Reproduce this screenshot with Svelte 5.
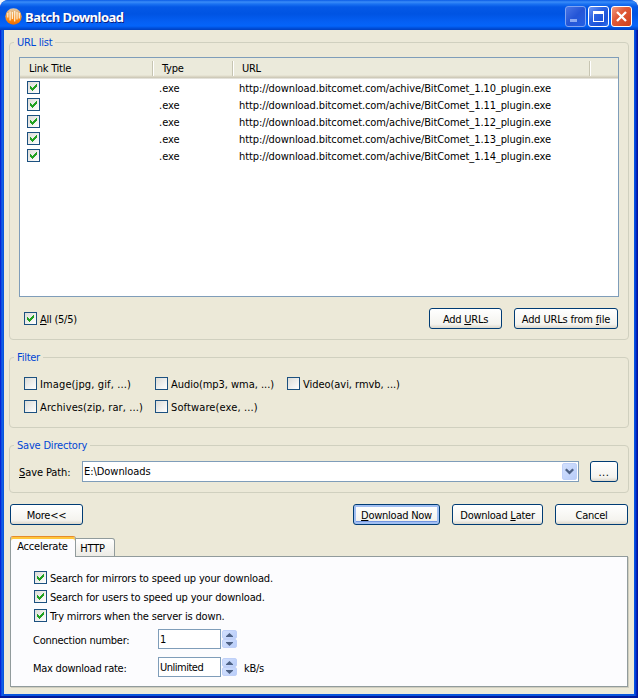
<script lang="ts">
	let items = $state(
		[10, 11, 12, 13, 14].map((n) => ({
			type: '.exe',
			url: `http://download.bitcomet.com/achive/BitComet_1.${n}_plugin.exe`,
			checked: true
		}))
	);

	let filters = $state([
		{ label: 'Image(jpg, gif, ...)', checked: false, size: 'wide' },
		{ label: 'Audio(mp3, wma, ...)', checked: false, size: 'medium' },
		{ label: 'Video(avi, rmvb, ...)', checked: false, size: 'medium' },
		{ label: 'Archives(zip, rar, ...)', checked: false, size: 'wide' },
		{ label: 'Software(exe, ...)', checked: false, size: 'wide' }
	]);

	let options = $state([
		{ label: 'Search for mirrors to speed up your download.', checked: true },
		{ label: 'Search for users to speed up your download.', checked: true },
		{ label: 'Try mirrors when the server is down.', checked: true }
	]);

	let save_path = $state('E:\\Downloads');
	let connections = $state('1');
	let max_rate = $state('Unlimited');

	let selected = $derived(items.filter((i) => i.checked).length);

	function toggle_all() {
		const next = selected !== items.length;
		items.forEach((i) => (i.checked = next));
	}
</script>

{#snippet check(checked: boolean, toggle: () => void, label: string)}
	<button class="check" role="checkbox" aria-checked={checked} aria-label={label} onclick={toggle}>
		{#if checked}
			<svg width="11" height="11" viewBox="0 0 11 11" shape-rendering="crispEdges"><path d="M2 4h1v1h1v1h1v-1h1v-1h1v-1h1v-1h1v3h-1v1h-1v1h-1v1h-1v1h-1v-1h-1v-1h-1z" fill="#21a121" /></svg>
		{/if}
	</button>
{/snippet}

{#snippet spinner()}
	<div class="spinner">
		<button aria-label="Increase"><svg width="7" height="4" viewBox="0 0 7 4"><path d="M3.5 0L7 3.2V4H0v-.8z" fill="#4d6185" /></svg></button>
		<button aria-label="Decrease"><svg width="7" height="4" viewBox="0 0 7 4"><path d="M3.5 4L7 .8V0H0v.8z" fill="#4d6185" /></svg></button>
	</div>
{/snippet}

<div class="window">
	<header class="titlebar">
		<svg class="app_icon" width="17" height="17" viewBox="0 0 17 17">
			<defs>
				<linearGradient id="ball" x1="0" y1="0" x2="0" y2="1">
					<stop offset="0" stop-color="#dcc9ae" />
					<stop offset=".4" stop-color="#f3a34a" />
					<stop offset=".75" stop-color="#fb8208" />
					<stop offset="1" stop-color="#e86a04" />
				</linearGradient>
			</defs>
			<circle cx="8.5" cy="8.5" r="8.2" fill="url(#ball)" />
			<path d="M2.8 5v4.5M5.1 3.5v9M7.4 4v7M9.7 3v10.5M12 4v7.5M14.3 5v5.5" stroke="#fff8e8" stroke-width="1.2" opacity=".9" />
		</svg>
		<h1>Batch Download</h1>
		<div class="win_btns">
			<button class="win_btn dim" aria-label="Minimize"><svg width="19" height="19" viewBox="0 0 19 19"><path d="M4 12h7v3H4z" fill="#8aa9f2" /></svg></button>
			<button class="win_btn" aria-label="Maximize"><svg width="19" height="19" viewBox="0 0 19 19"><path d="M4 4h11v11H4zM5 7v7h9V7z" fill="#fff" fill-rule="evenodd" /></svg></button>
			<button class="win_btn close" aria-label="Close"><svg width="19" height="19" viewBox="0 0 19 19"><path d="M5 5l9 9M14 5l-9 9" stroke="#fff" stroke-width="2.3" /></svg></button>
		</div>
	</header>

	<main>
		<fieldset class="urls">
			<legend>URL list</legend>
			<div class="list">
				<div class="row head">
					<span>Link Title</span>
					<span>Type</span>
					<span>URL</span>
					<span></span>
				</div>
				{#each items as item}
					<div class="row">
						<span>{@render check(item.checked, () => (item.checked = !item.checked), item.url)}</span>
						<span class="cell">{item.type}</span>
						<span class="cell url">{item.url}</span>
					</div>
				{/each}
			</div>
			<div class="list_foot">
				<div class="check_line">
					{@render check(selected === items.length, toggle_all, 'All')}
					<span><u>A</u>ll ({selected}/{items.length})</span>
				</div>
				<div class="btns">
					<button class="btn w_add"><span>Add <u>U</u>RLs</span></button>
					<button class="btn w_file"><span>Add URLs from <u>f</u>ile</span></button>
				</div>
			</div>
		</fieldset>

		<fieldset class="filter">
			<legend>Filter</legend>
			<div class="filter_grid">
				{#each filters as f}
					<div class="check_line">
						{@render check(f.checked, () => (f.checked = !f.checked), f.label)}
						<span class={f.size}>{f.label}</span>
					</div>
				{/each}
			</div>
		</fieldset>

		<fieldset class="save">
			<legend>Save Directory</legend>
			<div class="save_row">
				<label for="path"><u>S</u>ave Path:</label>
				<div class="combo">
					<input id="path" bind:value={save_path} />
					<button aria-label="Open list"><svg width="9" height="7" viewBox="0 0 9 7"><path d="M.8 1.2L4.5 4.8 8.2 1.2" fill="none" stroke="#4d6185" stroke-width="2.3" /></svg></button>
				</div>
				<button class="btn w_dots"><span>...</span></button>
			</div>
		</fieldset>

		<div class="actions">
			<button class="btn w_more"><span>More&lt;&lt;</span></button>
			<div class="btns">
				<button class="btn primary w_now"><span><u>D</u>ownload Now</span></button>
				<button class="btn w_later"><span>Download <u>L</u>ater</span></button>
				<button class="btn w_cancel"><span>Cancel</span></button>
			</div>
		</div>

		<div class="tabs">
			<button class="tab active">Accelerate</button>
			<button class="tab">HTTP</button>
		</div>
		<section class="panel">
			{#each options as o}
				<div class="check_line opt">
					{@render check(o.checked, () => (o.checked = !o.checked), o.label)}
					<span>{o.label}</span>
				</div>
			{/each}
			<div class="field first">
				<label for="conn">Connection number:</label>
				<input id="conn" bind:value={connections} />
				{@render spinner()}
			</div>
			<div class="field">
				<label for="rate">Max download rate:</label>
				<input id="rate" bind:value={max_rate} />
				{@render spinner()}
				<span class="unit">kB/s</span>
			</div>
		</section>
	</main>
</div>

<style>
	:global(body) {
		background: #f2f5fb;
	}

	.window,
	.window * {
		box-sizing: border-box;
	}

	.window {
		width: 638px;
		height: 698px;
		display: flex;
		flex-direction: column;
		padding: 0 4px 4px;
		border-radius: 8px 8px 0 0;
		background: linear-gradient(90deg, #0019cf 0, #0831d9 1px, #166aee 2px, #0855dd 3px, #0855dd 4px, #0855dd 634px, #0450e0 635px, #0030d0 636px, #0018a8 637px, #00138c 638px);
		box-shadow: inset 0 -2px #00199a;
		font: 11px/13px 'DejaVu Sans Condensed', 'DejaVu Sans', sans-serif;
		font-stretch: condensed;
		letter-spacing: -0.25px;
		color: #000;
		overflow: hidden;
	}

	button,
	input {
		font: inherit;
		letter-spacing: inherit;
		color: inherit;
		padding: 0;
		margin: 0;
		border: 0;
		outline: none;
	}

	span,
	label,
	.tab {
		white-space: pre;
	}

	.titlebar {
		flex: none;
		height: 30px;
		margin: 0 -4px;
		padding: 3px 6px 0 5px;
		display: flex;
		align-items: center;
		border-radius: 8px 8px 0 0;
		background: linear-gradient(#0a5be6 0, #3a8cf8 2px, #1a72f2 4px, #0458e6 7px, #0054e3 14px, #0560f4 22px, #0464fa 26px, #0050dc 28px, #0040c0 30px);
	}

	.app_icon {
		flex: none;
	}

	h1 {
		margin: 0 0 0 3px;
		flex: 1;
		font: bold 13px/18px 'Noto Sans', sans-serif;
		letter-spacing: -0.5px;
		color: #fff;
		text-shadow: 1px 1px #0a1f83;
		white-space: nowrap;
	}

	.win_btns {
		display: flex;
		gap: 2px;
	}

	.win_btn {
		width: 21px;
		height: 21px;
		border: 1px solid #fff;
		border-radius: 3px;
		background: linear-gradient(135deg, #6f97f4, #2a62e2 40%, #1c52d8 75%, #2f74f0);
	}

	.win_btn svg {
		display: block;
	}

	.win_btn.dim {
		border-color: #7fa3f2;
		background: linear-gradient(135deg, #4a76e6, #2455d6 50%, #2560e4);
	}

	.win_btn.close {
		background: linear-gradient(135deg, #f09a80, #e05a38 40%, #d0401a);
	}

	main {
		flex: 1;
		padding: 6px 5px 0;
		background: #ece9d8;
	}

	fieldset {
		margin: 0 0 11px;
		padding: 8px 9px 0;
		min-width: 0;
		border: 1px solid #d0d0bf;
		border-radius: 4px;
	}

	legend {
		height: 13px;
		margin-left: -5px;
		padding: 0 3px;
		color: #0046d5;
		white-space: nowrap;
	}

	.urls {
		height: 304px;
	}

	.filter {
		height: 77px;
	}

	.save {
		height: 54px;
		padding-top: 9px;
	}

	.save legend {
		letter-spacing: -0.2px;
	}

	.list {
		height: 240px;
		border: 1px solid #7f9db9;
		background: #fff;
	}

	.row {
		display: grid;
		grid-template-columns: 139px 80px 1fr;
		height: 17px;
		align-items: center;
	}

	.row span:first-child {
		padding-left: 7px;
	}

	.row .cell {
		padding-top: 1px;
		letter-spacing: 0;
	}

	.row .url {
		letter-spacing: -0.1px;
	}

	.row.head {
		grid-template-columns: 133px 80px 357px 1fr;
		height: 21px;
		background: linear-gradient(#ebeadb 0, #ebeadb 17px, #e0dccb 18px, #d5d1bf 19px, #c8c4b4 20px, #fff 21px);
	}

	.row.head span {
		height: 15px;
		padding: 1px 0 0 9px;
		border-right: 1px solid #c7c5b2;
		box-shadow: 1px 0 #fff;
	}

	.row.head span:last-child {
		border: 0;
		box-shadow: none;
	}

	.check {
		display: block;
		flex: none;
		width: 13px;
		height: 13px;
		border: 1px solid #1c5180;
		background: linear-gradient(135deg, #dcdcd7, #fff);
	}

	.check svg {
		display: block;
	}

	.check_line {
		display: flex;
		align-items: center;
		gap: 3px;
	}

	.check_line span {
		padding-top: 1px;
		margin-bottom: -1px;
	}

	.list_foot {
		display: flex;
		justify-content: space-between;
		align-items: center;
		height: 21px;
		margin-top: 11px;
		padding: 0 1px 0 5px;
	}

	.btns {
		display: flex;
		gap: 12px;
	}

	.btn {
		height: 21px;
		border: 1px solid #003c74;
		border-radius: 3px;
		background: linear-gradient(#fff, #f4f3ee 80%, #dcd7cb);
		text-align: center;
	}

	.btn span {
		display: block;
		padding-top: 1px;
	}

	.btn.primary {
		box-shadow: inset 0 0 0 2px #a2bff2, inset 0 -3px #7396e0;
	}

	.w_add,
	.w_more,
	.w_cancel {
		width: 73px;
	}

	.w_file {
		width: 104px;
		letter-spacing: -0.17px;
	}

	.w_dots {
		width: 28px;
		letter-spacing: 0.6px;
	}

	.w_now {
		width: 87px;
	}

	.w_later {
		width: 91px;
	}

	.filter_grid {
		display: grid;
		grid-template-columns: 131px 132px 1fr;
		row-gap: 10px;
		padding: 5px 0 0 5px;
	}

	.wide {
		letter-spacing: 0.12px;
	}

	.medium {
		letter-spacing: -0.04px;
	}

	.save_row {
		display: flex;
		align-items: center;
		height: 21px;
	}

	.save_row label {
		width: 63px;
		padding-top: 1px;
		letter-spacing: -0.1px;
	}

	.combo {
		display: flex;
		width: 497px;
		height: 21px;
		margin-right: 11px;
		padding: 1px;
		border: 1px solid #7f9db9;
		background: #fff;
	}

	.combo input {
		flex: 1;
		padding: 0;
		letter-spacing: -0.05px;
	}

	.combo button,
	.spinner button {
		display: flex;
		align-items: center;
		justify-content: center;
		border-radius: 2px;
		background: linear-gradient(135deg, #d2e0fd, #b9cdf9);
		border: 1px solid #bfd0f8;
	}

	.combo button {
		width: 15px;
	}

	.actions {
		display: flex;
		justify-content: space-between;
		padding: 0 1px;
	}

	.tabs {
		display: flex;
		align-items: flex-end;
		height: 21px;
		margin: 11px 0 -1px 1px;
	}

	.tab {
		width: 39px;
		height: 19px;
		border: 1px solid #919b9c;
		border-left: 0;
		border-radius: 0 3px 0 0;
		background: linear-gradient(#fff, #ecebe5);
		text-align: center;
		padding: 1px 5px 0 0;
	}

	.tab.active {
		width: 66px;
		height: 21px;
		padding: 0 1px 1px 0;
		border-left: 1px solid #919b9c;
		border-bottom: 0;
		border-radius: 3px 3px 0 0;
		border-top: 1px solid #e68b2c;
		box-shadow: inset 0 2px #ffc73c;
		background: #fcfcfe;
		letter-spacing: -0.2px;
	}

	.panel {
		height: 131px;
		margin: 0 1px;
		padding: 15px 0 0 22px;
		border: 1px solid #919b9c;
		border-top: 0;
		background: linear-gradient(90deg, transparent 65px, #919b9c 65px) 0 0 / 100% 1px no-repeat #fcfcfe;
		box-shadow: 1px 1px #d0cebf;
	}

	.opt {
		height: 13px;
		margin: 0 0 6px 1px;
		letter-spacing: -0.17px;
	}

	.field {
		display: flex;
		align-items: center;
		height: 20px;
		margin-top: 8px;
	}

	.field.first {
		margin-top: 7px;
	}

	.field label {
		width: 125px;
		padding-top: 2px;
	}

	.field input {
		width: 63px;
		height: 20px;
		padding: 0 1px;
		border: 1px solid #7f9db9;
		background: #fff;
		letter-spacing: -0.5px;
	}

	.spinner {
		display: flex;
		flex-direction: column;
		width: 15px;
		height: 18px;
		margin-left: 1px;
	}

	.spinner button {
		flex: 1;
	}

	.unit {
		margin-left: 7px;
		padding-top: 2px;
	}
</style>
